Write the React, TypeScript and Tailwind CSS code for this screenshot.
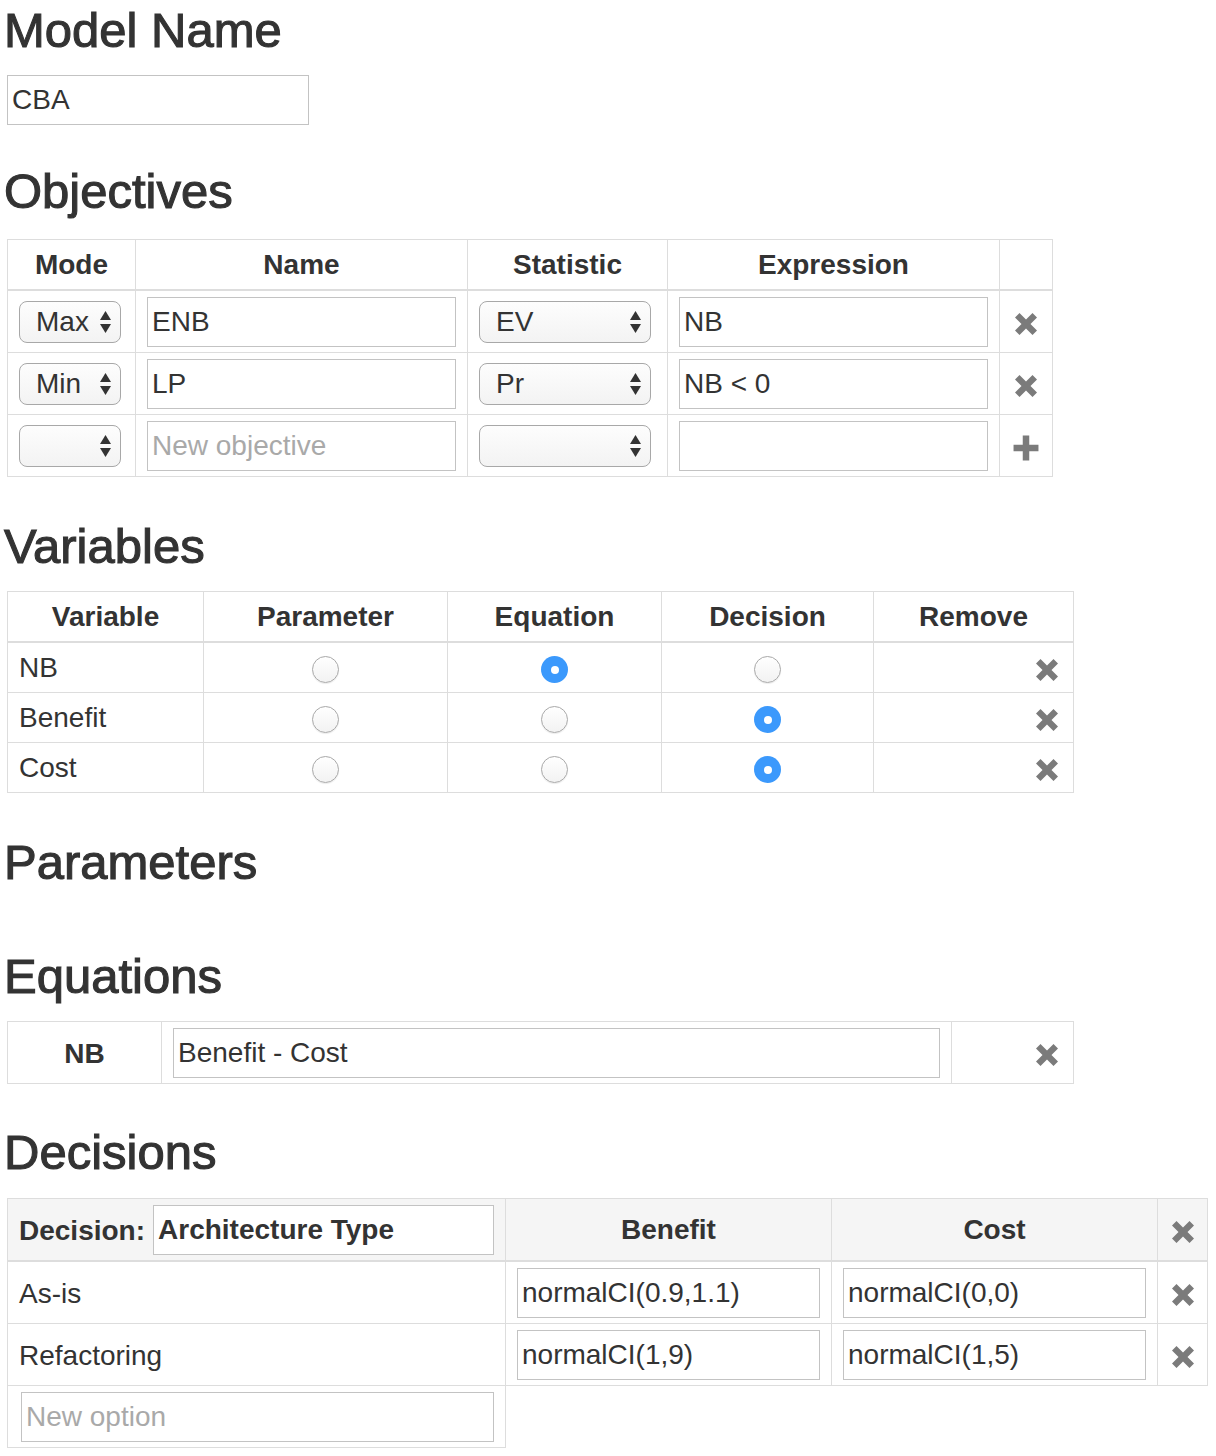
import React from "react";

// small glyphs, drawn to look like the bootstrap glyphicons
const RemoveIcon = () => (
  <svg width="24" height="24" viewBox="0 0 24 24" className="inline-block align-middle">
    <path
      d="M1 5.5 L5.5 1 L12 7.5 L18.5 1 L23 5.5 L16.5 12 L23 18.5 L18.5 23 L12 16.5 L5.5 23 L1 18.5 L7.5 12 Z"
      fill="#7b7b7b"
    />
  </svg>
);

const PlusIcon = () => (
  <svg width="26" height="26" viewBox="0 0 24 24" className="inline-block align-middle">
    <path d="M9 0.5 H15 V9 H23.5 V15 H15 V23.5 H9 V15 H0.5 V9 H9 Z" fill="#7b7b7b" />
  </svg>
);

const Heading = ({ children, className }: { children: React.ReactNode; className: string }) => (
  <h2
    className={
      "ml-[-3px] text-[49px] leading-[54px] font-normal text-[#333] [-webkit-text-stroke:1.1px_#333] " +
      className
    }
  >
    {children}
  </h2>
);

const TextInput = ({
  value,
  placeholder,
  bold,
}: {
  value?: string;
  placeholder?: string;
  bold?: boolean;
}) => (
  <input
    defaultValue={value}
    placeholder={placeholder}
    className={
      "block h-[50px] w-full border border-[#c3c3c3] bg-white px-[4px] text-[28px] text-[#333] outline-none placeholder:text-[#a9a9a9] " +
      (bold ? "font-bold" : "font-normal")
    }
  />
);

const Select = ({ value, width }: { value: string; width: string }) => (
  <div
    className={
      "flex h-[42px] items-center justify-between rounded-[8px] border border-[#a8a8a8] bg-gradient-to-b from-[#fdfdfd] to-[#f3f3f3] pl-[16px] pr-[8px] " +
      width
    }
  >
    <span className="leading-[40px]">{value}</span>
    <svg width="13" height="24" viewBox="0 0 13 24">
      <path d="M6.5 1 L12 10 H1 Z" fill="#333" />
      <path d="M1 14 H12 L6.5 23 Z" fill="#333" />
    </svg>
  </div>
);

const Radio = ({ checked }: { checked?: boolean }) =>
  checked ? (
    <span className="inline-flex h-[27px] w-[27px] items-center justify-center rounded-full bg-[#3b99fc] align-middle">
      <span className="h-[8px] w-[8px] rounded-full bg-white" />
    </span>
  ) : (
    <span className="inline-block h-[27px] w-[27px] rounded-full border border-[#a9a9a9] bg-gradient-to-b from-white to-[#f2f2f2] align-middle shadow-[0_1px_1px_rgba(0,0,0,0.08)]" />
  );

const th = "border border-b-2 border-[#ddd] px-[11px] py-[5px] text-center font-bold leading-[39px]";
const td = "border border-[#ddd] px-[11px] py-[5px] align-middle leading-[39px]";
// rows that hold inputs are a pixel taller
const tdIn = "border border-[#ddd] px-[11px] pt-[6px] pb-[5px] align-middle leading-[39px]";

const objectives = [
  { mode: "Max", name: "ENB", stat: "EV", expr: "NB" },
  { mode: "Min", name: "LP", stat: "Pr", expr: "NB < 0" },
];

const variables = [
  { name: "NB", kind: "equation" },
  { name: "Benefit", kind: "decision" },
  { name: "Cost", kind: "decision" },
];

const options = [
  { name: "As-is", benefit: "normalCI(0.9,1.1)", cost: "normalCI(0,0)" },
  { name: "Refactoring", benefit: "normalCI(1,9)", cost: "normalCI(1,5)" },
];

const App = () => {
  return (
    <div className="min-h-screen bg-white px-[7px] pt-[3px] font-['Liberation_Sans',Arial,sans-serif] text-[28px] text-[#333]">
      <Heading className="">Model Name</Heading>
      <div className="mt-[18px] w-[302px]">
        <TextInput value="CBA" />
      </div>

      {/* objectives */}
      <Heading className="mt-[39px]">Objectives</Heading>
      <table className="mt-[21px] w-[1045px] table-fixed border-collapse">
        <colgroup>
          <col className="w-[128px]" />
          <col className="w-[332px]" />
          <col className="w-[200px]" />
          <col className="w-[332px]" />
          <col className="w-[53px]" />
        </colgroup>
        <thead>
          <tr>
            <th className={th}>Mode</th>
            <th className={th}>Name</th>
            <th className={th}>Statistic</th>
            <th className={th}>Expression</th>
            <th className={th}></th>
          </tr>
        </thead>
        <tbody>
          {objectives.map((o) => (
            <tr key={o.name}>
              <td className={tdIn}>
                <Select value={o.mode} width="w-[102px]" />
              </td>
              <td className={tdIn}>
                <TextInput value={o.name} />
              </td>
              <td className={tdIn}>
                <Select value={o.stat} width="w-[172px]" />
              </td>
              <td className={tdIn}>
                <TextInput value={o.expr} />
              </td>
              <td className={tdIn + " text-center"}>
                <RemoveIcon />
              </td>
            </tr>
          ))}
          <tr>
            <td className={tdIn}>
              <Select value="" width="w-[102px]" />
            </td>
            <td className={tdIn}>
              <TextInput placeholder="New objective" />
            </td>
            <td className={tdIn}>
              <Select value="" width="w-[172px]" />
            </td>
            <td className={tdIn}>
              <TextInput />
            </td>
            <td className={tdIn + " text-center"}>
              <PlusIcon />
            </td>
          </tr>
        </tbody>
      </table>

      {/* variables */}
      <Heading className="mt-[42px]">Variables</Heading>
      <table className="mt-[18px] w-[1066px] table-fixed border-collapse">
        <colgroup>
          <col className="w-[196px]" />
          <col className="w-[244px]" />
          <col className="w-[214px]" />
          <col className="w-[212px]" />
          <col className="w-[200px]" />
        </colgroup>
        <thead>
          <tr>
            <th className={th}>Variable</th>
            <th className={th}>Parameter</th>
            <th className={th}>Equation</th>
            <th className={th}>Decision</th>
            <th className={th}>Remove</th>
          </tr>
        </thead>
        <tbody>
          {variables.map((v) => (
            <tr key={v.name}>
              <td className={td}>{v.name}</td>
              <td className={td + " text-center"}>
                <Radio checked={v.kind === "parameter"} />
              </td>
              <td className={td + " text-center"}>
                <Radio checked={v.kind === "equation"} />
              </td>
              <td className={td + " text-center"}>
                <Radio checked={v.kind === "decision"} />
              </td>
              <td className={td + " pr-[14px] text-right"}>
                <RemoveIcon />
              </td>
            </tr>
          ))}
        </tbody>
      </table>

      <Heading className="mt-[42px]">Parameters</Heading>

      {/* equations */}
      <Heading className="mt-[60px]">Equations</Heading>
      <table className="mt-[18px] w-[1066px] table-fixed border-collapse">
        <colgroup>
          <col className="w-[154px]" />
          <col className="w-[790px]" />
          <col className="w-[122px]" />
        </colgroup>
        <tbody>
          <tr>
            <td className={tdIn + " text-center font-bold"}>NB</td>
            <td className={tdIn}>
              <TextInput value="Benefit - Cost" />
            </td>
            <td className={tdIn + " pr-[14px] text-right"}>
              <RemoveIcon />
            </td>
          </tr>
        </tbody>
      </table>

      {/* decisions */}
      <Heading className="mt-[41px]">Decisions</Heading>
      <table className="mt-[19px] w-[1200px] table-fixed border-collapse">
        <colgroup>
          <col className="w-[498px]" />
          <col className="w-[326px]" />
          <col className="w-[326px]" />
          <col className="w-[50px]" />
        </colgroup>
        <thead>
          <tr className="bg-[#f5f5f5]">
            <th className={th + " pt-[6px] text-left"}>
              <div className="flex items-center gap-[8px]">
                <span>Decision:</span>
                <TextInput value="Architecture Type" bold />
              </div>
            </th>
            <th className={th}>Benefit</th>
            <th className={th}>Cost</th>
            <th className={th + " px-0"}>
              <RemoveIcon />
            </th>
          </tr>
        </thead>
        <tbody>
          {options.map((o) => (
            <tr key={o.name}>
              <td className={tdIn}>{o.name}</td>
              <td className={tdIn}>
                <TextInput value={o.benefit} />
              </td>
              <td className={tdIn}>
                <TextInput value={o.cost} />
              </td>
              <td className={tdIn + " px-0 text-center"}>
                <RemoveIcon />
              </td>
            </tr>
          ))}
          <tr>
            <td className={tdIn + " pl-[13px]"}>
              <TextInput placeholder="New option" />
            </td>
          </tr>
        </tbody>
      </table>
    </div>
  );
};

export default App;
